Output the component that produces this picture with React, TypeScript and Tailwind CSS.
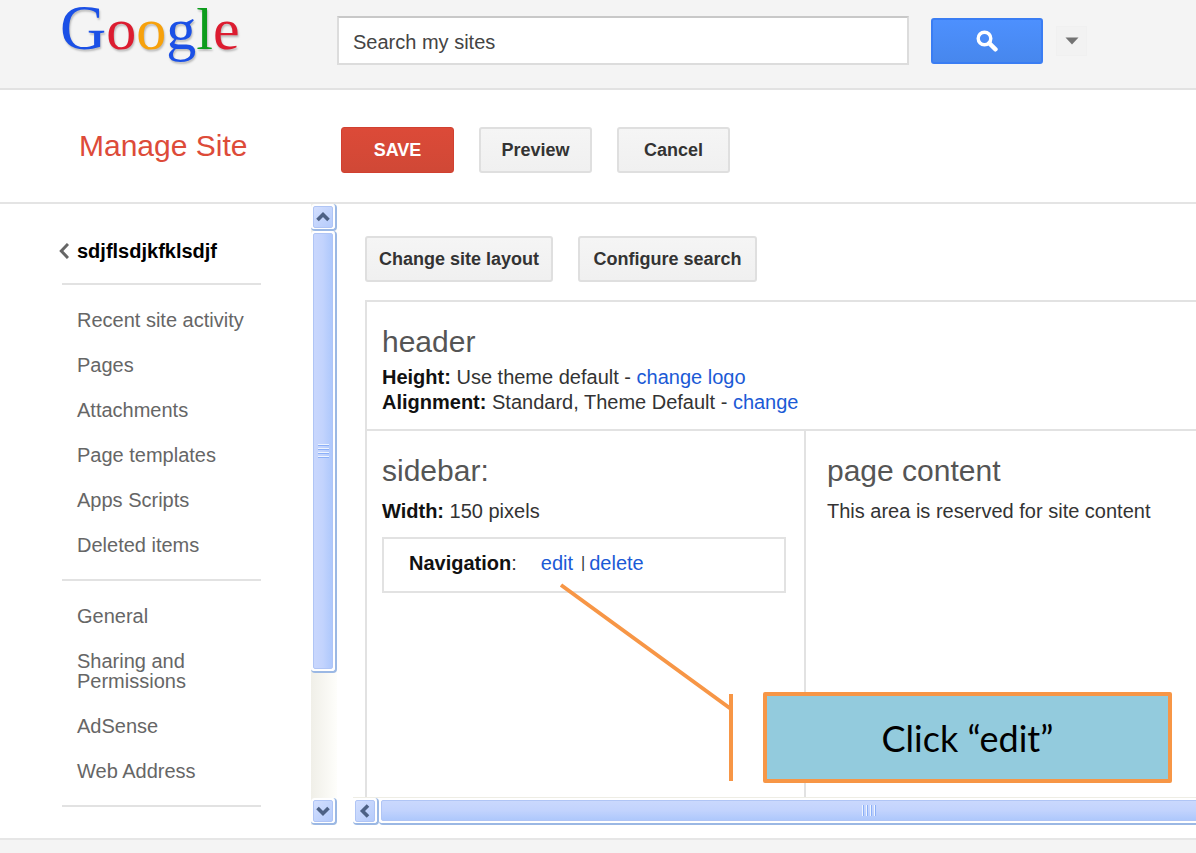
import type { ReactNode } from 'react';

const siteLinks = ['Recent site activity', 'Pages', 'Attachments', 'Page templates', 'Apps Scripts', 'Deleted items'];
const settingLinks = ['General', 'Sharing and Permissions', 'AdSense', 'Web Address'];

const Logo = () => {
    return (
        <a
            href="#home"
            aria-label="Google"
            className="flex items-baseline font-['Liberation_Serif',serif] text-[60px] leading-[56px] [text-shadow:1px_2px_2px_#bbbbbb]"
        >
            <span className="text-[64px] text-[#1b50e6]">G</span>
            <span className="text-[#dc1c30]">o</span>
            <span className="text-[#f7a10b]">o</span>
            <span className="text-[#1b50e6]">g</span>
            <span className="text-[#0d9c1c]">l</span>
            <span className="text-[#dc1c30]">e</span>
        </a>
    );
};

const Button = ({ children, className = '' }: { children: ReactNode; className?: string }) => {
    return (
        <button
            type="button"
            className={`h-[46px] rounded-[3px] border-2 border-[#dfdfdf] bg-linear-to-b from-[#f5f5f5] to-[#f0f0f0] text-[18px] font-bold text-[#333333] ${className}`}
        >
            {children}
        </button>
    );
};

const ScrollArrow = ({ label, path }: { label: string; path: string }) => {
    return (
        <button
            type="button"
            aria-label={label}
            className="flex h-[27px] w-[26px] shrink-0 items-center justify-center rounded-[4px] border-r-2 border-b-2 border-[#9bb8e4] bg-white"
        >
            <span className="flex h-[22px] w-5 items-center justify-center rounded-[2px] border border-[#b0c5f5] bg-linear-to-br from-[#d3dffe] to-[#b5cbfb]">
                <svg viewBox="0 0 16 16" className="size-4 shrink-0" fill="none" stroke="#4d6185" strokeWidth="3.6">
                    <path d={path} />
                </svg>
            </span>
        </button>
    );
};

const NavList = ({ items }: { items: string[] }) => {
    return (
        <ul className="flex flex-col gap-[25px] pt-[25px] pb-[24px] pl-[18px] leading-5 text-[#666666]">
            {items.map((item) => (
                <li key={item}>
                    <a href="#settings" className="block">{item}</a>
                </li>
            ))}
        </ul>
    );
};

const TopBar = () => {
    return (
        <header className="flex h-[90px] items-start border-b-2 border-[#e2e2e2] bg-[#f4f4f4] pl-[60px]">
            <div className="w-[277px] shrink-0">
                <Logo />
            </div>
            <form className="flex flex-1 items-center pt-4">
                <input
                    type="text"
                    aria-label="Search my sites"
                    placeholder="Search my sites"
                    className="h-[49px] w-[572px] border-2 border-[#dcdcdc] border-t-[#c8c8c8] bg-white px-[14px] pt-1 text-[20px] placeholder:text-[#444444]"
                />
                <button
                    type="button"
                    aria-label="Search"
                    className="ml-[22px] flex h-[46px] w-28 items-center justify-center rounded-[3px] border-2 border-[#3a7df3] bg-linear-to-b from-[#4d90fe] to-[#4787ed]"
                >
                    <svg viewBox="0 0 22 22" className="size-[22px]" fill="none" stroke="white">
                        <circle cx="8.5" cy="8.5" r="6.3" strokeWidth="3.4" />
                        <path d="M13.2 13.2 L19.5 19.3" strokeWidth="4.4" strokeLinecap="round" />
                    </svg>
                </button>
                <button
                    type="button"
                    aria-label="Search options"
                    className="ml-[13px] flex h-[30px] w-[31px] items-center justify-center border border-[#f0f0f0] bg-[#f2f2f2]"
                >
                    <svg viewBox="0 0 14 8" className="h-2 w-[14px]" fill="#737373">
                        <path d="M0.5 0.5 H13.5 L7 7.5 Z" />
                    </svg>
                </button>
            </form>
        </header>
    );
};

const Toolbar = () => {
    return (
        <div className="flex h-[114px] items-center border-b-2 border-[#e4e4e4] pt-2 pl-[79px]">
            <h1 className="w-[262px] shrink-0 pb-2 text-[30px] leading-9 text-[#dd4b39]">Manage Site</h1>
            <div className="flex gap-[25px]">
                <button
                    type="button"
                    className="h-[46px] w-[113px] rounded-[3px] border border-[#d14030] bg-linear-to-b from-[#dc4a38] to-[#d04836] text-[18px] font-bold text-white"
                >
                    SAVE
                </button>
                <Button className="w-[113px]">Preview</Button>
                <Button className="w-[113px]">Cancel</Button>
            </div>
        </div>
    );
};

const Sidebar = () => {
    return (
        <nav className="w-[311px] shrink-0 pt-[35px] pr-[50px] pb-[18px] pl-[59px]">
            <a href="#site" className="flex h-6 items-center gap-2 font-bold text-black">
                <svg viewBox="0 0 10 16" className="h-4 w-[10px]" fill="none" stroke="#666666" strokeWidth="3">
                    <path d="M9 1 L2.3 8 L9 15" />
                </svg>
                sdjflsdjkfklsdjf
            </a>
            <hr className="mt-5 ml-[3px] border-t-2 border-[#e2e2e2]" />
            <NavList items={siteLinks} />
            <hr className="ml-[3px] border-t-2 border-[#e2e2e2]" />
            <NavList items={settingLinks} />
            <hr className="ml-[3px] border-t-2 border-[#e2e2e2]" />
        </nav>
    );
};

const VerticalScrollbar = () => {
    return (
        <div className="flex w-[26px] shrink-0 flex-col bg-linear-to-r from-[#f0efe8] to-[#fefefb]">
            <ScrollArrow label="Scroll up" path="M2.5 11 L8 5.5 L13.5 11" />
            <div className="flex-1">
                <div className="flex h-[78%] w-[26px] rounded-[4px] border-r-2 border-b-2 border-[#9bb8e4] bg-white p-[2px]">
                    <div className="flex flex-1 flex-col items-center justify-center gap-[2px] rounded-[2px] border border-[#b0c5f5] bg-linear-to-r from-[#c9d7fd] via-[#c2d3fd] to-[#aec8fc]">
                        {[1, 2, 3, 4].map((n) => (
                            <span key={n} className="h-[2px] w-[11px] border-t border-b border-t-[#eef4fe] border-b-[#8cb0f8]" />
                        ))}
                    </div>
                </div>
            </div>
            <ScrollArrow label="Scroll down" path="M2.5 5 L8 10.5 L13.5 5" />
        </div>
    );
};

const HorizontalScrollbar = () => {
    return (
        <div className="flex overflow-hidden border-t border-[#eeede5]">
            <ScrollArrow label="Scroll left" path="M11 2.5 L5.5 8 L11 13.5" />
            <div className="flex h-[27px] w-[980px] shrink-0 rounded-[4px] border-b-2 border-[#9bb8e4] bg-white p-[2px]">
                <div className="flex flex-1 items-center justify-center gap-[2px] rounded-[2px] border border-[#b0c5f5] bg-linear-to-b from-[#cad8fd] via-[#c2d3fd] to-[#aec8fc]">
                    {[1, 2, 3, 4].map((n) => (
                        <span key={n} className="h-[11px] w-[2px] border-r border-l border-l-[#eef4fe] border-r-[#8cb0f8]" />
                    ))}
                </div>
            </div>
        </div>
    );
};

const LayoutEditor = () => {
    return (
        <main className="ml-4 flex min-w-0 flex-1 flex-col overflow-hidden">
            <div className="flex gap-[25px] pt-8 pb-[18px] pl-3">
                <Button className="w-[188px]">Change site layout</Button>
                <Button className="w-[179px]">Configure search</Button>
            </div>

            <div className="ml-3 flex flex-1 flex-col border-t-2 border-l-2 border-[#e2e2e2]">
                <section className="border-b-2 border-[#e2e2e2] pt-[22px] pb-[14px] pl-[15px] leading-[25px] text-[#333333]">
                    <h2 className="mb-[5px] text-[30px] leading-9 text-[#555555]">header</h2>
                    <p>
                        <b className="text-[#111111]">Height:</b> Use theme default - <a href="#logo" className="text-[#1b5ad6]">change logo</a>
                    </p>
                    <p>
                        <b className="text-[#111111]">Alignment:</b> Standard, Theme Default - <a href="#align" className="text-[#1b5ad6]">change</a>
                    </p>
                </section>

                <div className="flex flex-1 text-[#333333]">
                    <section className="w-[439px] shrink-0 border-r-2 border-[#e2e2e2] pt-[22px] pr-[18px] pl-[15px]">
                        <h2 className="mb-[10px] text-[30px] leading-9 text-[#555555]">sidebar:</h2>
                        <p className="leading-[25px]">
                            <b className="text-[#111111]">Width:</b> 150 pixels
                        </p>
                        <div className="mt-[13px] flex h-14 items-center border-2 border-[#e2e2e2] pb-1 pl-[25px]">
                            <b className="text-[#111111]">Navigation</b>:
                            <a href="#edit" className="ml-6 text-[#1b5ad6]">edit</a>
                            <span className="mr-1 ml-2 text-[16px]">|</span>
                            <a href="#delete" className="text-[#1b5ad6]">delete</a>
                        </div>
                    </section>
                    <section className="flex-1 pt-[22px] pl-[21px]">
                        <h2 className="mb-[10px] text-[30px] leading-9 text-[#555555]">page content</h2>
                        <p className="leading-[25px]">This area is reserved for site content</p>
                    </section>
                </div>
            </div>

            <HorizontalScrollbar />
        </main>
    );
};

const Callout = () => {
    return (
        <div className="pointer-events-none absolute top-[583px] left-[559px]">
            <svg viewBox="0 0 176 200" className="h-[200px] w-[176px]" fill="none" stroke="#f79646" strokeWidth="4">
                <path d="M2 2 L172 126 M172 111 V198" />
            </svg>
            <div className="absolute top-[109px] left-[204px] flex h-[91px] w-[409px] items-center justify-center rounded-[2px] border-4 border-[#f79646] bg-[#93cbdd] font-['Lato',sans-serif] text-[36px] text-black">
                Click “edit”
            </div>
        </div>
    );
};

const App = () => {
    return (
        <div className="relative flex min-h-screen flex-col bg-white font-['Liberation_Sans',Arial,sans-serif] text-[20px]">
            <TopBar />
            <Toolbar />
            <div className="flex">
                <Sidebar />
                <VerticalScrollbar />
                <LayoutEditor />
            </div>
            <footer className="mt-[13px] flex-1 border-t-2 border-[#e6e6e6] bg-[#f4f4f4]" />
            <Callout />
        </div>
    );
};

export default App;
